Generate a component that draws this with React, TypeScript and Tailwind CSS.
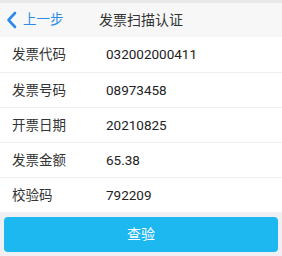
const rows = [
  { label: '发票代码', value: '032002000411' },
  { label: '发票号码', value: '08973458' },
  { label: '开票日期', value: '20210825' },
  { label: '发票金额', value: '65.38' },
  { label: '校验码', value: '792209' },
];

const font = { fontFamily: 'Roboto, "Noto Sans CJK SC", sans-serif' };

export default function App() {
  return (
    <div className="w-[282px] h-[256px] bg-[#efeff4] flex flex-col" style={font}>
      <div className="h-[3px] bg-[#e9e9e9]" />
      <div className="relative h-[34px] bg-[#f7f7f7] flex items-center justify-center">
        <button className="absolute left-[6px] top-0 h-full flex items-center gap-[6px] text-[#2a8ce8]">
          <svg width="11" height="18" viewBox="0 0 11 18" fill="none" stroke="currentColor" strokeWidth="2.6" strokeLinecap="round" strokeLinejoin="round">
            <polyline points="9,2 2.5,9 9,16" />
          </svg>
          <span className="text-[13.5px] leading-none">上一步</span>
        </button>
        <h1 className="text-[14px] leading-none text-[#333]">发票扫描认证</h1>
      </div>
      <div className="bg-white">
        {rows.map((r, i) => (
          <div
            key={r.label}
            className={`flex items-center h-[35px] ${i > 0 ? 'border-t border-[#efefef]' : ''}`}
          >
            <span className="w-[106px] pl-[12px] text-[13.5px] text-[#333]">{r.label}</span>
            <span className="text-[13.5px] text-[#222]">{r.value}</span>
          </div>
        ))}
      </div>
      <div className="px-[4px] pt-[5px]">
        <button className="w-full h-[35px] rounded-[4px] bg-[#1eb8f0] text-white text-[14px]">查验</button>
      </div>
    </div>
  );
}
